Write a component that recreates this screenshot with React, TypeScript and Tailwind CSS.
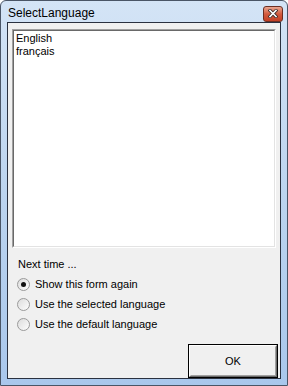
const font = { fontFamily: "'Liberation Sans', Arial, sans-serif" };

function Radio({ checked, label }: { checked?: boolean; label: string }) {
  return (
    <div className="flex items-center h-[20px]">
      <span className="ml-[9px] flex items-center justify-center w-[13px] h-[13px] rounded-full border border-[#9a9a9a] bg-gradient-to-br from-[#dcdcdc] to-[#fdfdfd]">
        {checked && <span className="w-[5px] h-[5px] rounded-full bg-[#111]" />}
      </span>
      <span className="ml-[5px] text-[11px] text-black leading-[13px]">{label}</span>
    </div>
  );
}

export default function App() {
  return (
    <div
      className="w-[288px] h-[386px] border border-[#4a5566] rounded-t-[6px] bg-gradient-to-b from-[#d4e4f6] via-[#bcd4ef] to-[#a9c7ec] flex flex-col"
      style={font}
    >
      <div className="h-[22px] flex items-center justify-between pl-[7px] pr-[4px]">
        <span className="text-[12px] text-black mt-[2px]">SelectLanguage</span>
        <div className="w-[20px] h-[16px] mt-[4px] rounded-[3px] border border-[#6b2e22] bg-gradient-to-b from-[#e8a590] via-[#d25a3e] to-[#c33f24] flex items-center justify-center">
          <svg width="10" height="9" viewBox="0 0 10 9">
            <path d="M2 1.5 L8 7.5 M8 1.5 L2 7.5" stroke="#3a2a28" strokeWidth="3.2" strokeLinecap="square" />
            <path d="M2 1.5 L8 7.5 M8 1.5 L2 7.5" stroke="#ffffff" strokeWidth="1.6" strokeLinecap="square" />
          </svg>
        </div>
      </div>
      <div className="mx-[6px] mb-[6px] flex-1 border border-[#2a3140] bg-[#f0f0f0] flex flex-col">
        <div className="mt-[6px] ml-[4px] w-[264px] h-[219px] border border-t-[#a0a0a0] border-l-[#a0a0a0] border-b-white border-r-white">
          <div className="w-full h-full bg-white border border-t-[#696969] border-l-[#696969] border-b-[#e3e3e3] border-r-[#e3e3e3] pl-[2px] pt-[1px] text-[11px] leading-[13px] text-black">
            <div>English</div>
            <div>français</div>
          </div>
        </div>
        <div className="mt-[10px] ml-[10px] text-[11px] leading-[13px] text-black">Next time ...</div>
        <div className="mt-[3px] flex flex-col">
          <Radio checked label="Show this form again" />
          <Radio label="Use the selected language" />
          <Radio label="Use the default language" />
        </div>
        <div className="mt-[10px] flex justify-end pr-[2px]">
          <div className="w-[90px] h-[34px] border border-black">
            <div className="w-full h-full border border-t-white border-l-white border-b-[#696969] border-r-[#696969] bg-[#f0f0f0]">
              <div className="w-full h-full border border-transparent border-b-[#a0a0a0] border-r-[#a0a0a0] flex items-center justify-center text-[11px] text-black">
                OK
              </div>
            </div>
          </div>
        </div>
      </div>
    </div>
  );
}
